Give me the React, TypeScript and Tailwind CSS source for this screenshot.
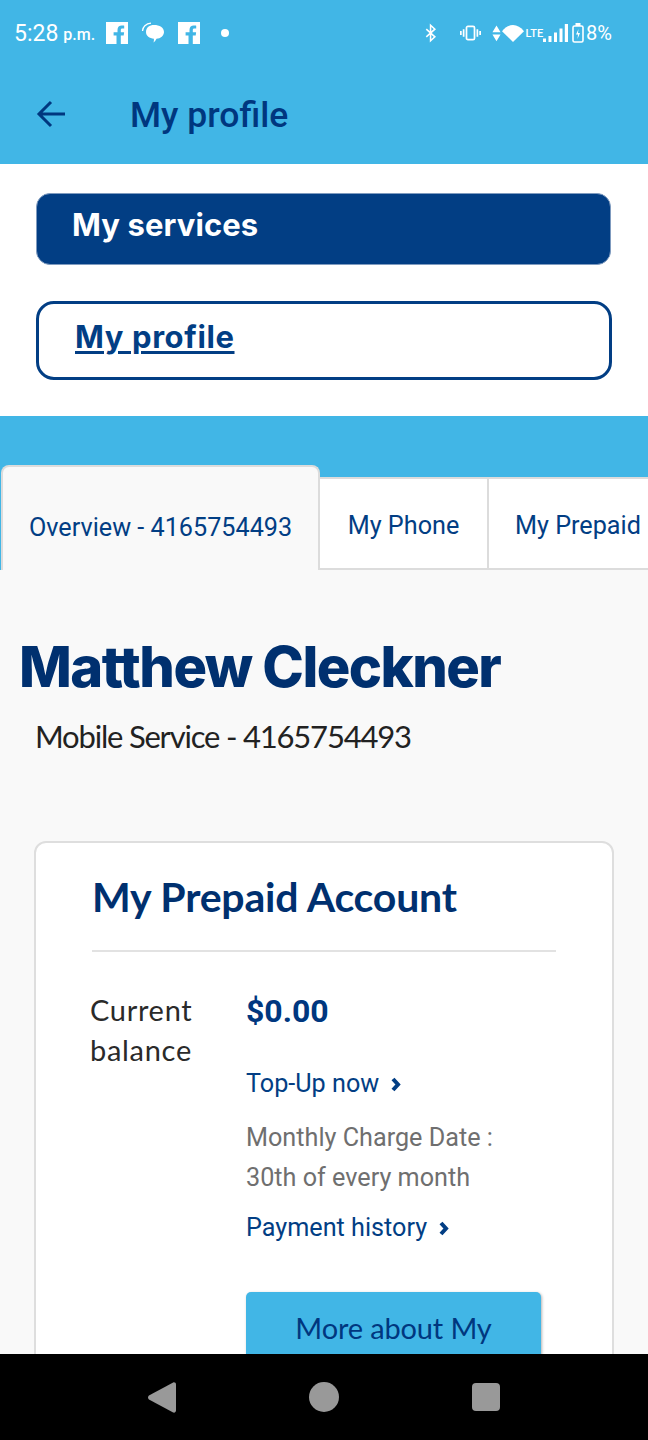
import type { FC } from 'react';

const FacebookIcon: FC = () => (
    <svg width="22" height="22" viewBox="0 0 22 22">
        <path fill="#fff" d="M0 0h22v22h-7.2v-8.4h2.9l.4-3.3h-3.3V8.2c0-1 .3-1.6 1.700-1.600h1.700V3.700c-.3 0-1.300-.1-2.500-.1-2.500 0-4.200 1.500-4.200 4.300v2.400H7.600v3.300h2.900V22H0z" />
    </svg>
);

const ChatIcon: FC = () => (
    <svg width="24" height="24" viewBox="0 0 24 24">
        <path fill="#fff" d="M13 4c5.500 0 10 2.500 10 7 0 3.800-3.500 6.500-7.500 6.800-.7 1.500-1.800 3-3 3.700.4-1.100.5-2.400.4-3.800C8.500 17.200 5 15 5 11c0-4.500 3.500-7 8-7z" />
        <path fill="none" stroke="#fff" strokeWidth="1.300" d="M1.500 10C1.500 6 5 2.500 10 2.200" />
    </svg>
);

const StatusIcons: FC = () => (
    <div className="flex items-center">
        <svg width="12" height="20" viewBox="0 0 14 20" className="mr-[23px]">
            <path fill="none" stroke="#fff" strokeWidth="1.800" d="M1.500 5.500l10 9-5 4.500V1l5 4.500-10 9" />
        </svg>
        <svg width="21" height="16" viewBox="0 0 22 16" className="mr-[11px]">
            <rect x="6.800" y="1" width="8.400" height="14" rx="1.500" fill="none" stroke="#fff" strokeWidth="1.800" />
            <path stroke="#fff" strokeWidth="1.800" d="M3.800 4v8M.9 6v4M18.200 4v8M21.100 6v4" />
        </svg>
        <svg width="9" height="19" viewBox="0 0 10 20" className="mr-[1px]">
            <path fill="#fff" d="M5 1l4.500 7.500h-9zM.5 11h9L5 18.500z" />
        </svg>
        <svg width="22" height="17" viewBox="0 0 22 15" preserveAspectRatio="none" className="mr-[2px]">
            <path fill="#fff" d="M11 15L0 5.500C3 2 7 0 11 0s8 2 11 5.500z" />
        </svg>
        <span className="mt-[1px] font-['Roboto',sans-serif] text-[11px] leading-none font-medium text-white">LTE</span>
        <svg width="25" height="18" viewBox="0 0 25 18" className="mr-[4px]">
            <path fill="#fff" d="M0 14.500h3V18H0zM5.500 12h3v6h-3zM11 8.500h3V18h-3zM16.500 4.500h3V18h-3zM21.800 0H25v18h-3.200z" />
        </svg>
        <svg width="12" height="20" viewBox="0 0 12 20" className="mr-[2px]">
            <rect x="1" y="3" width="10" height="16" rx="1.500" fill="none" stroke="#fff" strokeWidth="1.600" />
            <path fill="#fff" d="M3.500 0h5v3h-5zM6.500 6L4 11.500h2L5.500 16 8 10H6z" />
        </svg>
        <span className="font-['Roboto',sans-serif] text-[20px] leading-none text-white">8%</span>
    </div>
);

const Chevron: FC = () => (
    <svg width="10" height="15" viewBox="0 0 10 15" className="ml-[12px]">
        <path fill="none" stroke="#023e84" strokeWidth="4" d="M2 2l5 5.500L2 13" />
    </svg>
);

const App: FC = () => {
    return (
        <div className="flex h-[1440px] w-[648px] flex-col overflow-hidden bg-[#f9f9f9] font-['Roboto',sans-serif]">
            <header className="h-[164px] shrink-0 bg-[#41b6e6]">
                <div className="flex h-[64px] items-center justify-between pt-[2px] pr-[36px] pl-[14px]">
                    <div className="flex items-center">
                        <span className="text-[23px] leading-none text-white">5:28</span>
                        <span className="mt-[3px] ml-[5px] text-[16px] leading-none font-medium text-white">p.m.</span>
                        <div className="ml-[11px] flex items-center gap-[13px]">
                            <FacebookIcon />
                            <ChatIcon />
                            <FacebookIcon />
                        </div>
                        <span className="ml-[21px] size-[8px] rounded-full bg-white" />
                    </div>
                    <StatusIcons />
                </div>
                <div className="flex h-[100px] items-center pt-[3px] pl-[36px]">
                    <svg width="30" height="28" viewBox="0 0 30 28" className="mb-[3px]">
                        <path fill="none" stroke="#00377f" strokeWidth="3" d="M29 14H3M15 2L3 14l12 12" />
                    </svg>
                    <h1 className="ml-[64px] text-[35.500px] leading-none font-medium text-[#00377f]">My profile</h1>
                </div>
            </header>

            <section className="h-[252px] shrink-0 bg-white px-[36px] pt-[29px]">
                <div className="flex h-[72px] w-[575px] items-center rounded-[14px] border border-[#7f9bbf] bg-[#023e84] pb-[10px] pl-[35px]">
                    <span className="font-['Inter',sans-serif] text-[31px] leading-none font-bold tracking-[0.1px] text-white">My services</span>
                </div>
                <div className="mt-[36px] flex h-[79px] w-[576px] items-center rounded-[18px] border-[3px] border-[#023e84] bg-white pb-[8px] pl-[36px]">
                    <span className="font-['Inter',sans-serif] text-[31px] leading-none font-bold tracking-[0.6px] text-[#023e84] underline decoration-[3px] underline-offset-[3px]">My profile</span>
                </div>
            </section>

            <div className="flex h-[154px] shrink-0 items-end bg-[#41b6e6]">
                <div className="ml-px flex h-[105px] w-[319px] items-center rounded-t-[8px] border-x-2 border-t-2 border-[#dcdcdc] bg-[#f9f9f9] pt-[18px] pl-[26px]">
                    <span className="text-[25.200px] leading-none text-[#023e84]">Overview - 4165754493</span>
                </div>
                <div className="flex h-[93px] w-[169px] items-center justify-center border-y-2 border-r-2 border-[#dcdcdc] bg-white pt-[4px]">
                    <span className="text-[25.200px] leading-none text-[#023e84]">My Phone</span>
                </div>
                <div className="flex h-[93px] flex-1 items-center overflow-hidden border-y-2 border-[#dcdcdc] bg-white pt-[4px] pl-[26px]">
                    <span className="text-[25.200px] leading-none whitespace-nowrap text-[#023e84]">My Prepaid</span>
                </div>
            </div>

            <main className="min-h-0 flex-1 overflow-hidden">
                <h2 className="mt-[69px] ml-[19px] font-['Inter',sans-serif] text-[56px] leading-none font-extrabold tracking-[-1.550px] text-[#00306f]">Matthew Cleckner</h2>
                <p className="mt-[26px] ml-[35px] font-['Lato',sans-serif] text-[31px] leading-none tracking-[-1.200px] text-[#222]">Mobile Service - 4165754493</p>

                <div className="mt-[89px] ml-[34px] h-[600px] w-[580px] rounded-[12px] border-2 border-[#dedede] bg-white pl-[54px]">
                    <h3 className="ml-[2px] pt-[33px] font-['Lato',sans-serif] text-[41px] leading-none font-bold tracking-[-0.200px] text-[#00306f]">My Prepaid Account</h3>
                    <div className="mt-[33px] ml-[2px] h-[2px] w-[464px] bg-[#e2e2e2]" />
                    <div className="mt-[38px] flex">
                        <p className="w-[156px] shrink-0 font-['Lato',sans-serif] text-[29px] leading-[40px] tracking-[0.700px] text-[#2a2a2a]">Current<br />balance</p>
                        <div className="min-w-0 flex-1 pt-[1px]">
                            <p className="text-[32px] leading-[40px] font-bold text-[#00377f]">$0.00</p>
                            <p className="mt-[33px] flex h-[40px] items-center text-[25.200px] leading-none text-[#023e84]">Top-Up now<Chevron /></p>
                            <p className="mt-[14px] text-[25.200px] leading-[40px] text-[#6f6f6f]">Monthly Charge Date :<br />30th of every month</p>
                            <p className="mt-[10px] flex h-[40px] items-center text-[25.200px] leading-none text-[#023e84]">Payment history<Chevron /></p>
                            <div className="mt-[44px] flex h-[90px] w-[295px] justify-center rounded-[5px] bg-[#41b6e6] pt-[21px] shadow-[1px_1px_3px_rgba(0,0,0,0.3)]">
                                <span className="font-['Lato',sans-serif] text-[29px] leading-none tracking-[-0.150px] text-[#00377f]">More about My</span>
                            </div>
                        </div>
                    </div>
                </div>
            </main>

            <nav className="flex h-[86px] shrink-0 items-center bg-black pl-[148px]">
                <svg width="28" height="31" viewBox="0 0 30 32" preserveAspectRatio="none">
                    <path fill="#999" d="M27 .5c1.500-.5 3 .5 3 2v27c0 1.500-1.500 2.500-3 2L1 18c-1.300-1-1.300-3 0-4z" />
                </svg>
                <span className="ml-[133px] size-[30px] rounded-full bg-[#999]" />
                <span className="ml-[133px] size-[28px] rounded-[4px] bg-[#999]" />
            </nav>
        </div>
    );
};

export default App;
